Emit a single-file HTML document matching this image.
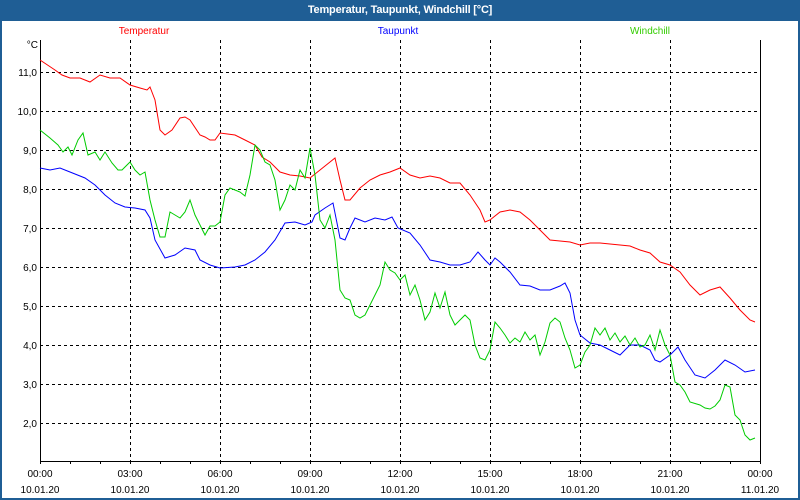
<!DOCTYPE html><html><head><style>
body{margin:0;width:800px;height:500px;overflow:hidden;background:#fff;font-family:"Liberation Sans",sans-serif}
.frame{position:absolute;left:0;top:0;width:796px;height:498px;border:2px solid #1f5e95;border-top:none}
.title{position:absolute;left:0;top:0;width:800px;height:21px;background:#1f5e95;color:#fff;font-weight:bold;font-size:11px;letter-spacing:-0.2px;text-align:center;line-height:20px}
</style></head><body>
<div class="frame"></div>
<div class="title">Temperatur, Taupunkt, Windchill [°C]</div>
<svg width="800" height="500" style="position:absolute;left:0;top:0" font-family="Liberation Sans,sans-serif" font-size="10">
<g stroke="#000" stroke-dasharray="3,3" stroke-width="1">
<line x1="40" x2="760" y1="72.5" y2="72.5"/><line x1="40" x2="760" y1="111.5" y2="111.5"/><line x1="40" x2="760" y1="150.5" y2="150.5"/><line x1="40" x2="760" y1="189.5" y2="189.5"/><line x1="40" x2="760" y1="228.5" y2="228.5"/><line x1="40" x2="760" y1="267.5" y2="267.5"/><line x1="40" x2="760" y1="306.5" y2="306.5"/><line x1="40" x2="760" y1="345.5" y2="345.5"/><line x1="40" x2="760" y1="384.5" y2="384.5"/><line x1="40" x2="760" y1="423.5" y2="423.5"/>
<line x1="130.5" x2="130.5" y1="40" y2="461"/><line x1="220.5" x2="220.5" y1="40" y2="461"/><line x1="310.5" x2="310.5" y1="40" y2="461"/><line x1="400.5" x2="400.5" y1="40" y2="461"/><line x1="490.5" x2="490.5" y1="40" y2="461"/><line x1="580.5" x2="580.5" y1="40" y2="461"/><line x1="670.5" x2="670.5" y1="40" y2="461"/>
</g>
<g stroke="#000" stroke-width="1" fill="none">
<path d="M40.5 40V461.5H760.5V40"/>
<path d="M70.5 461v3M100.5 461v3M130.5 461v3M160.5 461v3M190.5 461v3M220.5 461v3M250.5 461v3M280.5 461v3M310.5 461v3M340.5 461v3M370.5 461v3M400.5 461v3M430.5 461v3M460.5 461v3M490.5 461v3M520.5 461v3M550.5 461v3M580.5 461v3M610.5 461v3M640.5 461v3M670.5 461v3M700.5 461v3M730.5 461v3M40.5 461v3M760.5 461v3"/>
</g>
<g fill="#000" text-anchor="end">
<text x="38" y="48">°C</text>
<text x="37" y="76">11,0</text><text x="37" y="115">10,0</text><text x="37" y="154">9,0</text><text x="37" y="193">8,0</text><text x="37" y="232">7,0</text><text x="37" y="271">6,0</text><text x="37" y="310">5,0</text><text x="37" y="349">4,0</text><text x="37" y="388">3,0</text><text x="37" y="427">2,0</text>
</g>
<g fill="#000" text-anchor="middle">
<text x="40" y="477">00:00</text><text x="130" y="477">03:00</text><text x="220" y="477">06:00</text><text x="310" y="477">09:00</text><text x="400" y="477">12:00</text><text x="490" y="477">15:00</text><text x="580" y="477">18:00</text><text x="670" y="477">21:00</text><text x="760" y="477">00:00</text>
<text x="40" y="493">10.01.20</text><text x="130" y="493">10.01.20</text><text x="220" y="493">10.01.20</text><text x="310" y="493">10.01.20</text><text x="400" y="493">10.01.20</text><text x="490" y="493">10.01.20</text><text x="580" y="493">10.01.20</text><text x="670" y="493">10.01.20</text><text x="760" y="493">11.01.20</text>
<text x="144" y="34" fill="#f00">Temperatur</text><text x="398" y="34" fill="#00f">Taupunkt</text><text x="650" y="34" fill="#3c0">Windchill</text>
</g>
<g fill="none" stroke-width="1">
<polyline stroke="#f00" points="40,60 55,70 62,75 70,78 80,78 90,82 100,75 110,78 120,78 130,85 140,88 147,90 150,87 155,100 160,130 165,135 172,130 180,118 185,117 190,120 200,135 205,137 210,140 215,140 220,133 235,135 245,140 255,145 262,157 270,162 280,172 290,175 300,176 310,178 320,170 330,162 335,158 340,180 345,200 350,200 360,188 370,180 380,175 390,172 400,168 410,175 420,178 430,176 440,178 450,183 460,183 470,195 480,210 485,222 490,220 500,212 510,210 520,212 530,220 540,230 550,240 560,241 570,242 580,245 590,243 600,243 610,244 620,245 630,246 640,250 650,253 660,262 670,265 680,272 690,285 700,295 710,290 720,287 730,298 740,310 750,320 755,322"/>
<polyline stroke="#00f" points="40,168 50,170 60,168 70,172 85,178 95,185 105,195 115,203 125,207 135,208 145,210 150,218 155,240 165,258 175,255 185,248 195,250 200,260 210,265 220,268 235,267 245,265 255,260 265,252 275,240 285,223 295,222 305,225 312,222 315,215 325,208 333,203 340,238 345,240 350,228 355,218 365,222 375,218 385,220 392,217 398,228 410,233 420,245 430,260 440,262 450,265 460,265 470,262 478,252 485,260 490,265 495,258 500,262 510,272 520,285 530,286 540,290 550,290 560,286 565,283 570,293 575,320 580,335 590,343 600,345 610,350 620,355 630,345 640,345 650,350 655,360 660,362 670,355 678,347 685,360 695,375 705,378 715,370 725,360 735,365 745,372 755,370"/>
<polyline stroke="#0c0" points="40,130 50,138 58,145 63,152 68,147 72,155 78,140 83,133 88,155 95,152 100,160 105,152 112,163 118,170 122,170 130,162 135,170 140,175 145,172 150,200 155,220 160,237 165,237 170,212 175,215 180,218 185,212 190,200 195,215 200,225 205,235 210,226 215,226 220,222 225,195 230,188 240,192 245,196 250,175 255,145 260,150 265,162 270,165 275,180 280,210 285,200 290,185 295,190 300,170 305,178 310,148 315,175 320,220 325,228 330,215 335,240 340,290 345,298 350,300 355,315 360,318 365,315 370,305 380,285 385,262 390,270 395,273 400,280 405,275 410,295 415,285 420,300 425,320 430,312 435,293 440,308 445,292 450,315 455,325 460,320 465,315 470,320 475,345 480,358 485,360 490,350 495,322 500,328 505,335 510,343 515,338 520,342 525,332 530,340 535,335 540,355 545,342 550,323 555,318 560,322 565,338 570,350 575,368 580,365 585,352 590,345 595,328 600,335 605,328 610,340 615,333 620,342 625,336 630,345 635,338 640,347 645,345 650,335 655,350 660,330 665,345 670,355 675,382 680,385 685,392 690,402 700,405 705,408 710,409 715,406 720,400 725,385 730,387 735,415 740,420 745,435 750,440 755,438"/>
</g>
</svg>
</body></html>
